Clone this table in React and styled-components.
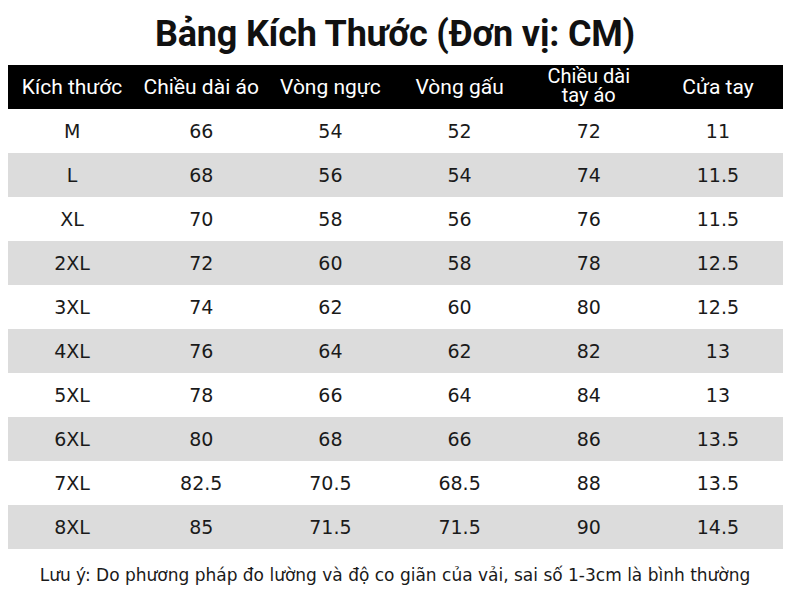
import React from 'react';
import styled, { createGlobalStyle } from 'styled-components';

const GlobalStyle = createGlobalStyle`
  html, body {
    margin: 0;
    padding: 0;
    background: #fff;
  }
`;

const Page = styled.div`
  width: 790px;
  height: 597px;
  display: flex;
  flex-direction: column;
  align-items: center;
  background: #fff;
  overflow: hidden;
`;

const Title = styled.h1`
  margin: 12px 0 0;
  height: 53px;
  font-family: Roboto, 'Liberation Sans', sans-serif;
  font-weight: 700;
  font-size: 36px;
  line-height: 44px;
  color: #111;
  letter-spacing: -0.2px;
`;

const Table = styled.div`
  width: 775px;
  display: grid;
  grid-template-columns: repeat(6, 1fr);
`;

const HeadCell = styled.div`
  height: 44px;
  display: flex;
  align-items: center;
  justify-content: center;
  text-align: center;
  background: #000;
  color: #fff;
  font-family: Roboto, 'Liberation Sans', sans-serif;
  font-size: ${(p) => (p.$small ? '20px' : '21px')};
  line-height: ${(p) => (p.$small ? '19px' : '24px')};
  padding-bottom: ${(p) => (p.$small ? '2px' : '0')};
  box-sizing: border-box;
`;

const Cell = styled.div`
  height: 44px;
  display: flex;
  align-items: center;
  justify-content: center;
  background: ${(p) => (p.$shade ? '#dcdcdc' : '#fff')};
  color: #1a1a1a;
  font-family: 'DejaVu Sans', Verdana, sans-serif;
  font-size: 19px;
`;

const Note = styled.p`
  margin: 16px 0 0;
  font-family: 'DejaVu Sans', Verdana, sans-serif;
  font-size: 17px;
  color: #1a1a1a;
`;

const headers = [
  'Kích thước',
  'Chiều dài áo',
  'Vòng ngực',
  'Vòng gấu',
  'Chiều dài\ntay áo',
  'Cửa tay',
];

const rows = [
  ['M', '66', '54', '52', '72', '11'],
  ['L', '68', '56', '54', '74', '11.5'],
  ['XL', '70', '58', '56', '76', '11.5'],
  ['2XL', '72', '60', '58', '78', '12.5'],
  ['3XL', '74', '62', '60', '80', '12.5'],
  ['4XL', '76', '64', '62', '82', '13'],
  ['5XL', '78', '66', '64', '84', '13'],
  ['6XL', '80', '68', '66', '86', '13.5'],
  ['7XL', '82.5', '70.5', '68.5', '88', '13.5'],
  ['8XL', '85', '71.5', '71.5', '90', '14.5'],
];

export default function App() {
  return (
    <Page>
      <GlobalStyle />
      <Title>Bảng Kích Thước (Đơn vị: CM)</Title>
      <Table>
        {headers.map((h) => {
          const parts = h.split('\n');
          return (
            <HeadCell key={h} $small={parts.length > 1}>
              {parts.length > 1 ? (
                <span>
                  {parts[0]}
                  <br />
                  {parts[1]}
                </span>
              ) : (
                h
              )}
            </HeadCell>
          );
        })}
        {rows.map((row, i) =>
          row.map((v, j) => (
            <Cell key={`${i}-${j}`} $shade={i % 2 === 1}>
              {v}
            </Cell>
          ))
        )}
      </Table>
      <Note>Lưu ý: Do phương pháp đo lường và độ co giãn của vải, sai số 1-3cm là bình thường</Note>
    </Page>
  );
}
